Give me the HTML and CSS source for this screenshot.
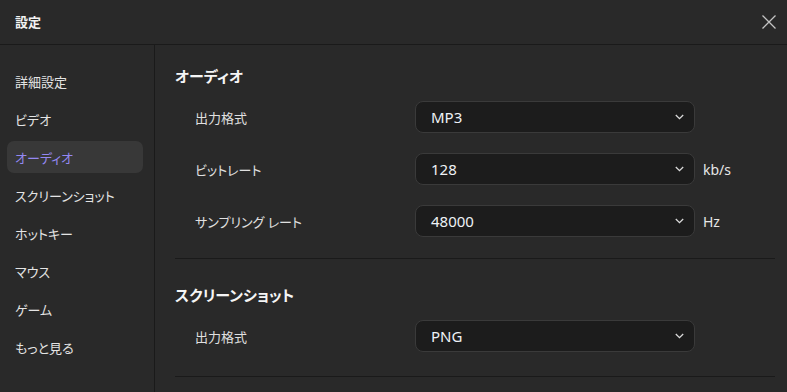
FILE: index.html
```html
<!DOCTYPE html>
<html lang="ja">
<head>
<meta charset="utf-8">
<title>設定</title>
<link rel="stylesheet" href="styles.css">
</head>
<body>
<div class="window">
  <header class="titlebar">
    <span class="title">設定</span>
    <button class="close" aria-label="閉じる">
      <svg width="14" height="14" viewBox="0 0 14 14"><path d="M0.5 0.5 L13.5 13.5 M13.5 0.5 L0.5 13.5" stroke="#c4c4c4" stroke-width="1.3" fill="none"/></svg>
    </button>
  </header>
  <div class="main">
    <nav class="sidebar">
      <div class="nav-item">詳細設定</div>
      <div class="nav-item">ビデオ</div>
      <div class="nav-item active">オーディオ</div>
      <div class="nav-item">スクリーンショット</div>
      <div class="nav-item">ホットキー</div>
      <div class="nav-item">マウス</div>
      <div class="nav-item">ゲーム</div>
      <div class="nav-item">もっと見る</div>
    </nav>
    <section class="content">
      <div class="section first">
        <h2 class="section-title">オーディオ</h2>
        <div class="rows">
          <div class="row">
            <span class="label">出力格式</span>
            <div class="select"><span>MP3</span><svg class="chev" width="9" height="6" viewBox="0 0 9 6"><path d="M0.8 1 L4.5 4.6 L8.2 1" stroke="#dcdcdc" stroke-width="1.3" fill="none"/></svg></div>
          </div>
          <div class="row">
            <span class="label">ビットレート</span>
            <div class="select"><span>128</span><svg class="chev" width="9" height="6" viewBox="0 0 9 6"><path d="M0.8 1 L4.5 4.6 L8.2 1" stroke="#dcdcdc" stroke-width="1.3" fill="none"/></svg></div>
            <span class="unit">kb/s</span>
          </div>
          <div class="row">
            <span class="label">サンプリング レート</span>
            <div class="select"><span>48000</span><svg class="chev" width="9" height="6" viewBox="0 0 9 6"><path d="M0.8 1 L4.5 4.6 L8.2 1" stroke="#dcdcdc" stroke-width="1.3" fill="none"/></svg></div>
            <span class="unit">Hz</span>
          </div>
        </div>
      </div>
      <div class="section second">
        <h2 class="section-title">スクリーンショット</h2>
        <div class="rows">
          <div class="row">
            <span class="label">出力格式</span>
            <div class="select"><span>PNG</span><svg class="chev" width="9" height="6" viewBox="0 0 9 6"><path d="M0.8 1 L4.5 4.6 L8.2 1" stroke="#dcdcdc" stroke-width="1.3" fill="none"/></svg></div>
          </div>
        </div>
      </div>
    </section>
  </div>
</div>
</body>
</html>
```
FILE: styles.css
```css
* { box-sizing: border-box; }
html, body {
  margin: 0;
  padding: 0;
  background: #292929;
}
body {
  width: 787px;
  height: 392px;
  overflow: hidden;
  font-family: "Noto Sans", "Noto Sans CJK JP", sans-serif;
  color: #e6e6e6;
  font-feature-settings: "palt";
}
.window {
  display: flex;
  flex-direction: column;
  height: 392px;
}
.titlebar {
  height: 45px;
  flex: none;
  display: flex;
  align-items: center;
  justify-content: space-between;
  padding: 0 11px 0 15px;
  border-bottom: 1px solid #1a1a1a;
}
.title {
  font-size: 13px;
  font-weight: 700;
  color: #f2f2f2;
  line-height: 1;
}
.close {
  background: none;
  border: 0;
  padding: 0;
  width: 14px;
  height: 14px;
  display: flex;
  margin-top: -1px;
}
.main {
  flex: 1;
  display: flex;
  min-height: 0;
}
.sidebar {
  width: 155px;
  flex: none;
  border-right: 1px solid #1a1a1a;
  padding: 20px 11px 0 7px;
  display: flex;
  flex-direction: column;
  gap: 6px;
}
.nav-item {
  height: 32px;
  display: flex;
  align-items: center;
  padding-left: 8px;
  font-size: 13px;
  color: #e4e4e4;
  border-radius: 7px;
}
.nav-item.active {
  background: #383838;
  color: #9488f2;
}
.content {
  flex: 1;
  padding: 0 12px 0 20px;
}
.section {
  border-bottom: 1px solid #1a1a1a;
}
.section.first { padding: 20px 0 21px; }
.section.second { padding: 25px 0 24px; }
.section-title {
  margin: 0 0 14px;
  font-size: 15px;
  line-height: 22px;
  font-weight: 700;
  color: #f5f5f5;
}
.rows {
  display: flex;
  flex-direction: column;
  gap: 20px;
}
.row {
  display: flex;
  align-items: center;
}
.label {
  width: 240px;
  padding-left: 20px;
  font-size: 13px;
  color: #e0e0e0;
}
.select {
  width: 280px;
  height: 32px;
  background: #1c1c1c;
  border: 1px solid #3a3a3a;
  border-radius: 8px;
  display: flex;
  align-items: center;
  justify-content: space-between;
  padding: 0 10px 0 15px;
  font-size: 15px;
  color: #eef2f6;
}
.chev { display: block; }
.unit {
  margin-left: 8px;
  font-size: 14px;
  color: #e6e6e6;
}
```
